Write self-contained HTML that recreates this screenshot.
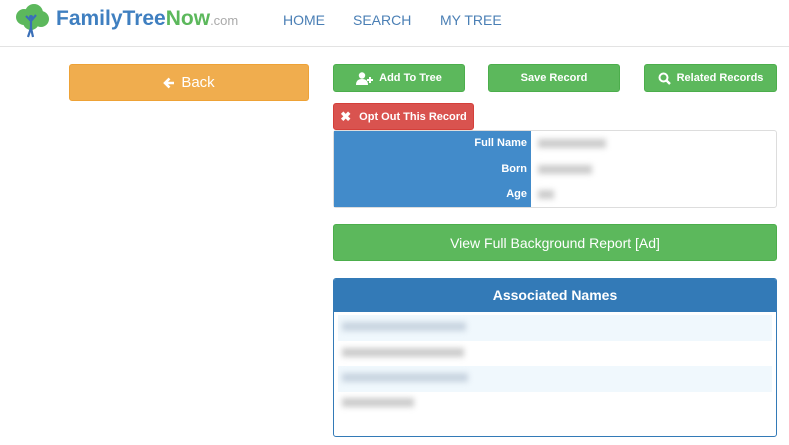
<!DOCTYPE html>
<html><head><style>
*{box-sizing:border-box;margin:0;padding:0}
body{width:789px;height:445px;overflow:hidden;background:#fff;font-family:"Liberation Sans",Arial,sans-serif;position:relative}
.a{position:absolute}
.hdr{left:0;top:0;width:789px;height:47px;border-bottom:1px solid #e3e3e3}
.nav{top:12px;font-size:14px;color:#4a7fb5}
.btn{position:absolute;color:#fff;font-weight:bold;font-size:11px;border-radius:3px;display:flex;align-items:center;justify-content:center}
.g{background:#5cb85c;border:1px solid #4cae4c}
.blur{position:absolute;background:#ccc;filter:blur(3px);height:9px}
</style></head><body>
<div class="a hdr"></div>
<svg class="a" style="left:14px;top:4px" width="36" height="34" viewBox="0 0 36 34">
<circle cx="10" cy="13" r="8" fill="#5cb85c"/><circle cx="20" cy="9" r="9" fill="#5cb85c"/><circle cx="27" cy="15" r="8" fill="#5cb85c"/><circle cx="17" cy="18" r="8" fill="#5cb85c"/>
<circle cx="17" cy="13" r="2" fill="#3a6fb8"/><path d="M12 12 L17 17 L22 11 M17 17 L17 24 L14 33 M17 24 L19 33" stroke="#3a6fb8" stroke-width="2.2" fill="none"/>
</svg>
<div class="a" style="left:56px;top:7px;font-size:21px;font-weight:bold;color:#3f7fc0;letter-spacing:0">FamilyTree<span style="color:#5cb85c">Now</span><span style="font-size:13px;font-weight:normal;color:#aaa">.com</span></div>
<div class="a nav" style="left:283px">HOME</div>
<div class="a nav" style="left:353px">SEARCH</div>
<div class="a nav" style="left:440px">MY TREE</div>
<div class="btn" style="left:69px;top:64px;width:240px;height:37px;background:#f0ad4e;border:1px solid #eea236;font-size:15px;font-weight:normal"><svg width="12" height="12" viewBox="0 0 12 12" style="margin-right:6px"><path d="M11 6 H3 M6.5 1.5 L2 6 L6.5 10.5" stroke="#fff" stroke-width="2.6" fill="none"/></svg>Back</div>
<div class="btn g" style="left:333px;top:64px;width:132px;height:28px"><svg width="18" height="13" viewBox="0 0 18 13" style="margin-right:5px"><circle cx="6" cy="3.5" r="3.2" fill="#fff"/><path d="M0 13 Q0 7 6 7 Q12 7 12 13Z" fill="#fff"/><path d="M14 5 V11 M11 8 H17" stroke="#fff" stroke-width="2"/></svg>Add To Tree</div>
<div class="btn g" style="left:488px;top:64px;width:132px;height:28px">Save Record</div>
<div class="btn g" style="left:644px;top:64px;width:133px;height:28px"><svg width="13" height="13" viewBox="0 0 13 13" style="margin-right:6px"><circle cx="5.5" cy="5.5" r="4" stroke="#fff" stroke-width="2" fill="none"/><path d="M8.5 8.5 L12 12" stroke="#fff" stroke-width="2.4"/></svg>Related Records</div>
<div class="btn" style="left:333px;top:103px;width:141px;height:27px;background:#d9534f;border:1px solid #d43f3a"><span style="font-size:13px;margin-right:8px">✖</span>Opt Out This Record</div>
<div class="a" style="left:333px;top:130px;width:444px;height:78px;border:1px solid #ddd;border-radius:3px;background:#fff"></div>
<div class="a" style="left:334px;top:131px;width:197px;height:76px;background:#428bca"></div>
<div class="a" style="left:334px;top:131px;width:193px;text-align:right;color:#fff;font-weight:bold;font-size:11px;line-height:25.5px">Full Name<br>Born<br>Age</div>
<div class="blur" style="left:538px;top:139px;width:68px"></div>
<div class="blur" style="left:538px;top:165px;width:54px"></div>
<div class="blur" style="left:538px;top:190px;width:16px"></div>
<div class="btn g" style="left:333px;top:224px;width:444px;height:37px;font-size:14px;font-weight:normal">View Full Background Report [Ad]</div>
<div class="a" style="left:333px;top:278px;width:444px;height:159px;border:1px solid #337ab7;border-radius:3px;overflow:hidden">
<div style="height:33px;background:#337ab7;color:#fff;font-weight:bold;font-size:14px;text-align:center;line-height:32px">Associated Names</div>
<div class="a" style="left:4px;top:36px;width:434px;height:26px;background:#f0f8fd"></div>
<div class="a" style="left:4px;top:87px;width:434px;height:26px;background:#f0f8fd"></div>
</div>
<div class="blur" style="left:342px;top:322px;width:124px;background:#c8d4e0"></div>
<div class="blur" style="left:342px;top:348px;width:122px"></div>
<div class="blur" style="left:342px;top:373px;width:126px;background:#c8d4e0"></div>
<div class="blur" style="left:342px;top:398px;width:72px"></div>
</body></html>
